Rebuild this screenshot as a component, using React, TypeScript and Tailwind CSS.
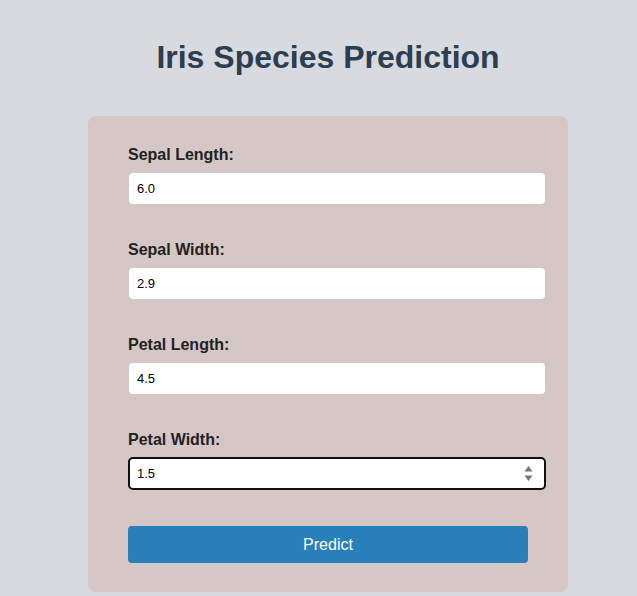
import React from "react";

const fields = [
  { label: "Sepal Length:", value: "6.0" },
  { label: "Sepal Width:", value: "2.9" },
  { label: "Petal Length:", value: "4.5" },
  { label: "Petal Width:", value: "1.5", focused: true },
];

const App = () => {
  return (
    <div className="min-h-[596px] bg-[#d7dadf] font-['Liberation_Sans',Arial,sans-serif]">
      <div className="ml-[88px] w-[480px]">
        <h1 className="pt-[39px] text-center text-[32px] font-bold leading-[37px] text-[#2c3e50]">
          Iris Species Prediction
        </h1>

        <div className="mt-[40px] rounded-lg bg-[#d5c7c6] px-[40px] pt-[30px] pb-[29px]">
          {fields.map((f) => (
            <div key={f.label} className="mb-[37px]">
              <label className="block text-[16px] font-bold leading-[18px] text-[#222]">
                {f.label}
              </label>
              <div className="relative mt-[9px] ml-px w-[416px]">
                <input
                  type="text"
                  defaultValue={f.value}
                  className={
                    f.focused
                      ? "block h-[31px] w-full rounded bg-white px-2 text-[13px] text-black outline-2 outline-offset-[-1px] outline-[#101010]"
                      : "block h-[31px] w-full rounded bg-white px-2 text-[13px] text-black outline-none"
                  }
                />
                {f.focused && (
                  <svg
                    className="absolute right-[12px] top-[7px]"
                    width="9"
                    height="17"
                    viewBox="0 0 9 17"
                  >
                    <path d="M4.5 1 L8.5 6.5 L0.5 6.5 Z" fill="#767676" />
                    <path d="M4.5 16 L8.5 10.5 L0.5 10.5 Z" fill="#767676" />
                  </svg>
                )}
              </div>
            </div>
          ))}

          <button className="block h-[37px] w-[400px] rounded bg-[#2980b9] text-[16px] text-white">
            Predict
          </button>
        </div>
      </div>
    </div>
  );
};

export default App;
